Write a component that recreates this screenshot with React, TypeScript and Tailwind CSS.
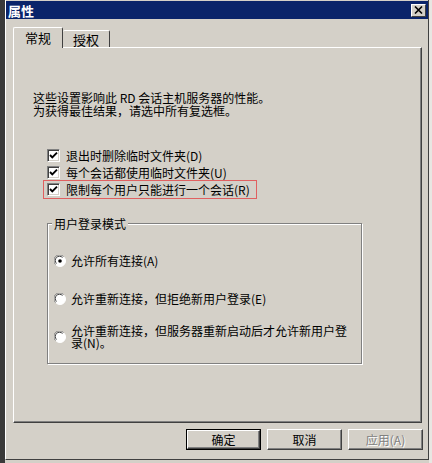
const font = "font-['Noto_Sans_CJK_SC','Noto_Sans',sans-serif]";

function CheckBox() {
  return (
    <span className="flex h-[13px] w-[13px] shrink-0 items-center justify-center border-t border-l border-t-[#808080] border-l-[#808080] border-b border-r border-b-white border-r-white bg-white shadow-[inset_1px_1px_0_#404040,inset_-1px_-1px_0_#d4d0c8]">
      <svg width="9" height="9" viewBox="0 0 9 9">
        <path d="M1 4 L3.3 6.4 L8 1.6" fill="none" stroke="#000" strokeWidth="1.9" />
      </svg>
    </span>
  );
}

function Radio({ on }: { on?: boolean }) {
  return (
    <svg width="12" height="12" viewBox="0 0 12 12" className="shrink-0">
      <circle cx="6" cy="6" r="5.5" fill="#fff" />
      <path d="M1.5 9.5 A5.5 5.5 0 0 1 9.5 1.5" fill="none" stroke="#808080" strokeWidth="1" />
      <path d="M2.5 8.5 A4.2 4.2 0 0 1 8.5 2.5" fill="none" stroke="#404040" strokeWidth="1" />
      <path d="M9.9 2.1 A5.5 5.5 0 0 1 2.1 9.9" fill="none" stroke="#fff" strokeWidth="1" />
      {on && <circle cx="6" cy="6" r="1.8" fill="#000" />}
    </svg>
  );
}

function Button({ children, def, disabled }: { children: React.ReactNode; def?: boolean; disabled?: boolean }) {
  return (
    <div className={`h-[21px] w-[75px] ${def ? "border border-black" : ""}`}>
      <div className="flex h-full w-full items-center justify-center border-t border-l border-t-white border-l-white border-b border-r border-b-[#404040] border-r-[#404040] shadow-[inset_-1px_-1px_0_#808080]">
        <span className={disabled ? "text-[#808080] [text-shadow:1px_1px_0_#fff]" : ""}>{children}</span>
      </div>
    </div>
  );
}

const intro = "这些设置影响此 RD 会话主机服务器的性能。\n为获得最佳结果，请选中所有复选框。";

export default function App() {
  return (
    <div className={`flex h-[463px] w-[432px] overflow-hidden bg-[#d4d0c8] text-[12px] leading-[13px] text-black ${font}`}>
      <div className="w-[5px] shrink-0 bg-[#3a3a3a]" />
      <div className="flex h-[460px] w-[424px] shrink-0 flex-col border-l border-white border-r border-r-[#404040] border-b border-b-[#404040] pt-px">
        <div className="flex h-[18px] items-center justify-between bg-[#0a246a] pl-[2px] pr-[2px]">
          <span className="text-[13px] font-bold text-white">属性</span>
          <div className="flex h-[13px] w-[15px] items-center justify-center bg-[#d4d0c8] border-t border-l border-t-white border-l-white border-b border-r border-b-[#404040] border-r-[#404040]">
            <svg width="9" height="8" viewBox="0 0 9 8">
              <path d="M1 0.5 L8 7.5 M8 0.5 L1 7.5" stroke="#000" strokeWidth="1.6" />
            </svg>
          </div>
        </div>

        {/* tabs */}
        <div className="flex items-end pl-[7px] pt-[8px]">
          <div className="relative z-10 -mb-px flex h-[21px] w-[50px] items-center justify-center rounded-t-[2px] border-t border-l border-t-white border-l-white border-r border-r-[#404040] bg-[#d4d0c8] pb-[2px] text-[13px]">
            常规
          </div>
          <div className="flex h-[17px] w-[47px] items-center justify-center rounded-t-[2px] border-t border-t-white border-r border-r-[#404040] text-[13px]">
            授权
          </div>
        </div>

        <div className="ml-[7px] flex h-[376px] w-[409px] flex-col border-t border-l border-t-white border-l-white border-r border-b border-r-[#404040] border-b-[#404040] shadow-[inset_-1px_-1px_0_#808080]">
          <p className="ml-[19px] mt-[43px] whitespace-pre-line">{intro}</p>

          <div className="ml-[29px] mt-[29px] flex w-[214px] flex-col">
            <div className="flex h-[18px] items-center gap-[6px] pl-[4px]">
              <CheckBox />
              <span>退出时删除临时文件夹(D)</span>
            </div>
            <div className="flex h-[17px] items-center gap-[6px] pl-[4px]">
              <CheckBox />
              <span>每个会话都使用临时文件夹(U)</span>
            </div>
            <div className="-mt-px flex h-[19px] items-center gap-[6px] border border-[#e06060] pl-[3px]">
              <CheckBox />
              <span>限制每个用户只能进行一个会话(R)</span>
            </div>
          </div>

          <div className="relative ml-[33px] mt-[24px] h-[141px] w-[315px] border border-[#808080] shadow-[inset_1px_1px_0_#fff,1px_1px_0_#fff]">
            <span className="absolute -top-[7px] left-[4px] bg-[#d4d0c8] px-[2px]">用户登录模式</span>
            <div className="flex flex-col pl-[6px] pt-[30px]">
              <div className="flex items-center gap-[5px]">
                <Radio on />
                <span>允许所有连接(A)</span>
              </div>
              <div className="mt-[25px] flex items-center gap-[5px]">
                <Radio />
                <span>允许重新连接，但拒绝新用户登录(E)</span>
              </div>
              <div className="mt-[20px] flex items-center gap-[5px]">
                <Radio />
                <span className="w-[284px] leading-[12px]">允许重新连接，但服务器重新启动后才允许新用户登录(N)。</span>
              </div>
            </div>
          </div>
        </div>

        <div className="mt-[6px] flex justify-end gap-[6px] pr-[5px]">
          <Button def>确定</Button>
          <Button>取消</Button>
          <Button disabled>应用(A)</Button>
        </div>
      </div>
      <div className="flex-1 bg-[#e8e6e2]" />
    </div>
  );
}
